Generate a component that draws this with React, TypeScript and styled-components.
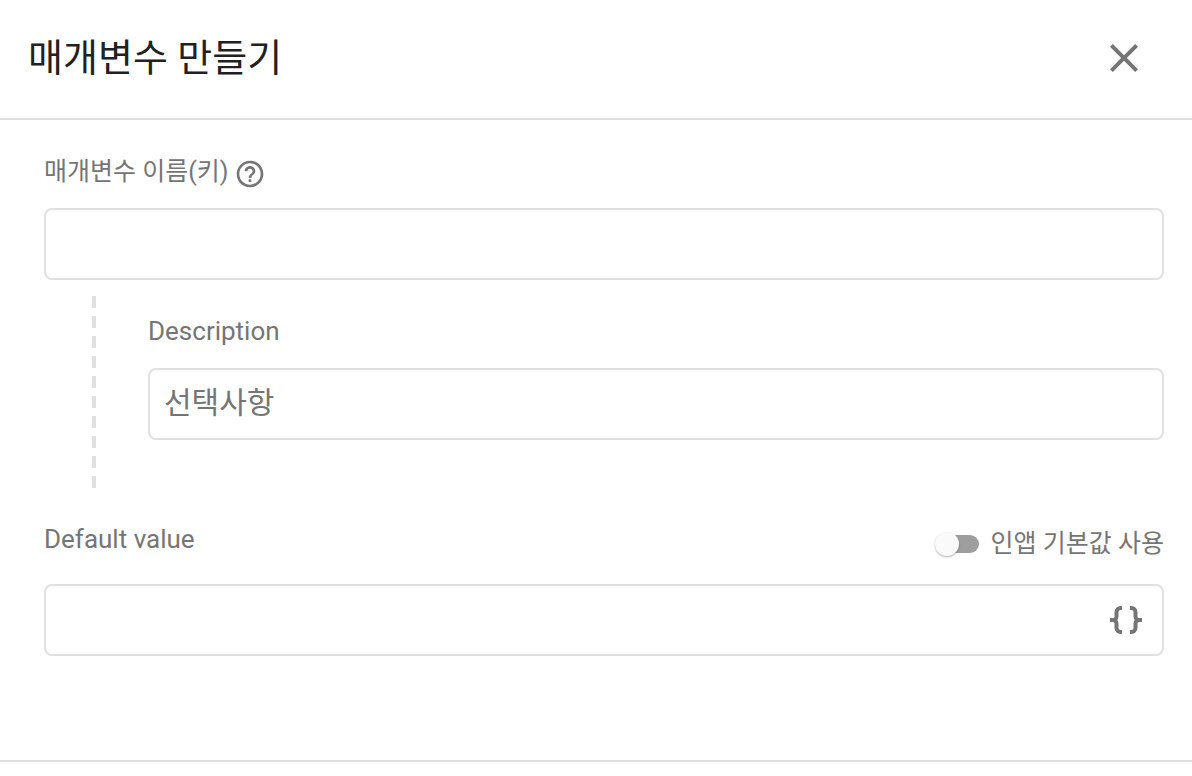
import React from "react";
import styled, { createGlobalStyle } from "styled-components";
import { MdClose, MdHelpOutline } from "react-icons/md";

const GlobalStyle = createGlobalStyle`
  *, *::before, *::after { box-sizing: border-box; }
  body {
    margin: 0;
    background: #fff;
    color: #757575;
    font-family: Roboto, "Noto Sans CJK KR", sans-serif;
  }
`;

const Dialog = styled.main`
  width: 100%;
`;

const Header = styled.header`
  display: flex;
  align-items: center;
  justify-content: space-between;
  padding: 30px 44px 32px 28px;
  border-bottom: 2px solid #e0e0e0;
`;

const Title = styled.h1`
  margin: 0;
  color: #212121;
  font-size: 38px;
  font-weight: 400;
  line-height: 56px;
`;

const IconButton = styled.button`
  display: flex;
  padding: 0;
  border: 0;
  background: transparent;
  color: #757575;
  cursor: pointer;
`;

const Form = styled.form`
  padding: 36px 28px 104px 44px;
  border-bottom: 2px solid #e0e0e0;
`;

const LabelRow = styled.div`
  display: flex;
  align-items: flex-end;
  gap: 6px;
  height: 34px;
  margin-bottom: 18px;
`;

const SplitRow = styled.div`
  display: flex;
  align-items: flex-start;
  justify-content: space-between;
  height: 36px;
  margin-bottom: 24px;
`;

const Label = styled.label<{ $korean?: boolean }>`
  align-self: flex-start;
  font-size: ${(p) => (p.$korean ? 25 : 26)}px;
  line-height: ${(p) => (p.$korean ? 32 : 30)}px;
`;

const Field = styled.div`
  position: relative;
`;

const TextInput = styled.input<{ $trailing?: boolean }>`
  display: block;
  width: 100%;
  height: 72px;
  padding: 0 ${(p) => (p.$trailing ? 64 : 14)}px 4px 14px;
  border: 2px solid #e0e0e0;
  border-radius: 8px;
  background: #fff;
  color: #212121;
  font-family: inherit;
  font-size: 30px;

  &::placeholder {
    color: #757575;
    opacity: 1;
  }
`;

const Nested = styled.div`
  margin: 16px 0 36px 48px;
  padding: 20px 0 48px 56px;
  background: repeating-linear-gradient(#e0e0e0 0 12px, transparent 12px 20px) left top / 4px 100% no-repeat;
`;

const NestedLabelRow = styled(LabelRow)`
  height: 32px;
  margin-bottom: 20px;
`;

const ToggleGroup = styled.div`
  display: flex;
  align-items: center;
  gap: 12px;
  height: 40px;
`;

const ToggleLabel = styled.label`
  font-size: 25px;
  line-height: 40px;
`;

const Toggle = styled.input`
  appearance: none;
  position: relative;
  width: 42px;
  height: 18px;
  margin: 0;
  border-radius: 9px;
  background: #9e9e9e;
  cursor: pointer;

  &::before {
    content: "";
    position: absolute;
    top: -3px;
    left: -2px;
    width: 24px;
    height: 24px;
    border-radius: 50%;
    background: #fafafa;
    box-shadow: 0 1px 2px rgba(0, 0, 0, 0.32);
  }

  &:checked::before {
    left: 20px;
  }
`;

const BracesButton = styled(IconButton)`
  position: absolute;
  top: 22px;
  right: 22px;
`;

function BracesIcon() {
  return (
    <svg width="32" height="28" viewBox="0 0 32 28" fill="none" stroke="currentColor" strokeWidth="4" aria-hidden="true">
      <path d="M12 2h-1.5a4 4 0 0 0-4 4v4.500a3.500 3.500 0 0 1-3.500 3.500H0h3a3.500 3.500 0 0 1 3.500 3.500v4.500a4 4 0 0 0 4 4H12" />
      <path d="M20 2h1.500a4 4 0 0 1 4 4v4.500a3.500 3.500 0 0 0 3.500 3.500h3h-3a3.500 3.500 0 0 0-3.500 3.500v4.500a4 4 0 0 1-4 4H20" />
    </svg>
  );
}

export default function App() {
  return (
    <Dialog lang="ko">
      <GlobalStyle />
      <Header>
        <Title>매개변수 만들기</Title>
        <IconButton type="button" aria-label="닫기">
          <MdClose size={48} />
        </IconButton>
      </Header>
      <Form>
        <LabelRow>
          <Label htmlFor="name" $korean>매개변수 이름(키)</Label>
          <IconButton type="button" aria-label="도움말">
            <MdHelpOutline size={32} />
          </IconButton>
        </LabelRow>
        <TextInput id="name" type="text" />
        <Nested>
          <NestedLabelRow>
            <Label htmlFor="description">Description</Label>
          </NestedLabelRow>
          <TextInput id="description" type="text" placeholder="선택사항" />
        </Nested>
        <SplitRow>
          <Label htmlFor="default-value">Default value</Label>
          <ToggleGroup>
            <Toggle id="in-app" type="checkbox" />
            <ToggleLabel htmlFor="in-app">인앱 기본값 사용</ToggleLabel>
          </ToggleGroup>
        </SplitRow>
        <Field>
          <TextInput id="default-value" type="text" $trailing />
          <BracesButton type="button" aria-label="JSON">
            <BracesIcon />
          </BracesButton>
        </Field>
      </Form>
    </Dialog>
  );
}
